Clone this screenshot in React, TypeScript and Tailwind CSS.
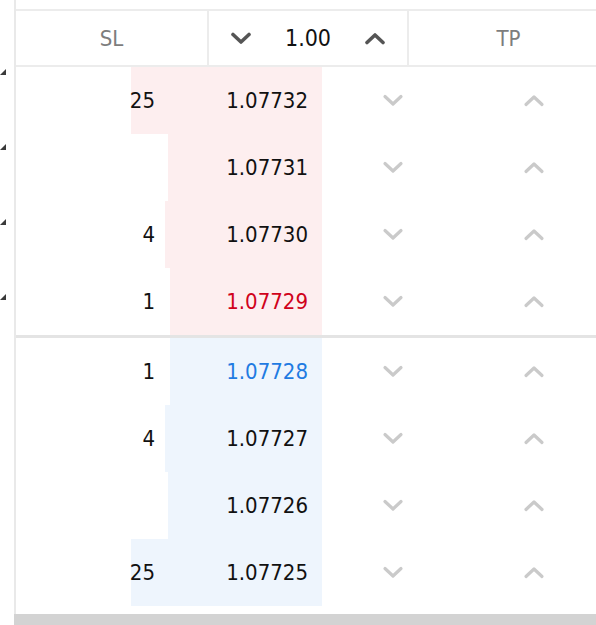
const font = "font-['DejaVu_Sans_Condensed','DejaVu_Sans',sans-serif]";

type Level = {
  sl: string;
  price: string;
  barFrom: number; // left edge of the volume bar, px from the panel edge
};

const asks: Level[] = [
  { sl: '25', price: '1.07732', barFrom: 115 },
  { sl: '', price: '1.07731', barFrom: 152 },
  { sl: '4', price: '1.07730', barFrom: 149 },
  { sl: '1', price: '1.07729', barFrom: 154 },
];

const bids: Level[] = [
  { sl: '1', price: '1.07728', barFrom: 154 },
  { sl: '4', price: '1.07727', barFrom: 149 },
  { sl: '', price: '1.07726', barFrom: 152 },
  { sl: '25', price: '1.07725', barFrom: 115 },
];

const BAR_END = 306;

const Chevron = ({ up, className, weight = 3.2 }: { up?: boolean; className?: string; weight?: number }) => (
  <svg viewBox="0 0 22 13" className={className} fill="none" stroke="currentColor" strokeWidth={weight} strokeLinecap="round" strokeLinejoin="round">
    {up ? <polyline points="3,10.5 11,3 19,10.5" /> : <polyline points="3,2.5 11,10 19,2.5" />}
  </svg>
);

const Row = ({ level, side, best }: { level: Level; side: 'ask' | 'bid'; best?: boolean }) => {
  const priceColor = best ? (side === 'ask' ? 'text-[#d0021b]' : 'text-[#1f7be2]') : 'text-[#111]';
  return (
    <div className="relative flex h-[67px] items-center">
      <div
        className={`absolute inset-y-0 ${side === 'ask' ? 'bg-[#fdeeef]' : 'bg-[#eef5fd]'}`}
        style={{ left: level.barFrom, width: BAR_END - level.barFrom }}
      />
      <div className="relative w-[139px] text-right text-[#111]">{level.sl}</div>
      <div className={`relative w-[153px] text-right ${priceColor}`}>{level.price}</div>
      <div className="w-[32px]" />
      <div className="flex w-[106px] justify-center text-[#cacaca]">
        <Chevron className="h-[13px] w-[22px]" />
      </div>
      <div className="w-[34px]" />
      <div className="flex w-[108px] justify-center text-[#cacaca]">
        <Chevron up className="h-[13px] w-[22px]" />
      </div>
    </div>
  );
};

const Marker = () => (
  <svg viewBox="0 0 6 6" className="h-[6px] w-[6px]">
    <polygon points="6,0 6,6 0,6" fill="#3a3a3a" />
  </svg>
);

export default function App() {
  return (
    <div className={`flex h-[625px] w-[596px] overflow-hidden bg-white text-[22px] ${font}`}>
      {/* edge of the neighbouring panel */}
      <div className="flex w-[14px] flex-col pt-[69px]">
        {[0, 1, 2, 3].map((i) => (
          <div key={i} className="h-[75px]">
            <Marker />
          </div>
        ))}
      </div>

      <div className="flex flex-1 flex-col border-l-2 border-[#e9e9e9] pt-[9px]">
        <div className="flex h-[58px] border-y-2 border-[#ececec]">
          <div className="flex w-[193px] items-center justify-center border-r-2 border-[#ececec] text-[#7d7d7d]">SL</div>
          <div className="flex w-[200px] items-center justify-center gap-[33px] border-r-2 border-[#ececec] text-[23px] text-[#111]">
            <Chevron className="h-[13px] w-[22px] text-[#555]" weight={3.6} />
            <span>1.00</span>
            <Chevron up className="h-[13px] w-[22px] text-[#555]" weight={3.6} />
          </div>
          <div className="flex flex-1 items-center justify-center pl-[12px] text-[#7d7d7d]">TP</div>
        </div>

        <div className="flex flex-col">
          {asks.map((l, i) => (
            <Row key={l.price} level={l} side="ask" best={i === asks.length - 1} />
          ))}
        </div>
        <div className="h-[3px] bg-[#e4e4e4]" />
        <div className="flex flex-col">
          {bids.map((l, i) => (
            <Row key={l.price} level={l} side="bid" best={i === 0} />
          ))}
        </div>

        <div className="-ml-[2px] mt-auto h-[11px] bg-[#d3d3d3]" />
      </div>
    </div>
  );
}
